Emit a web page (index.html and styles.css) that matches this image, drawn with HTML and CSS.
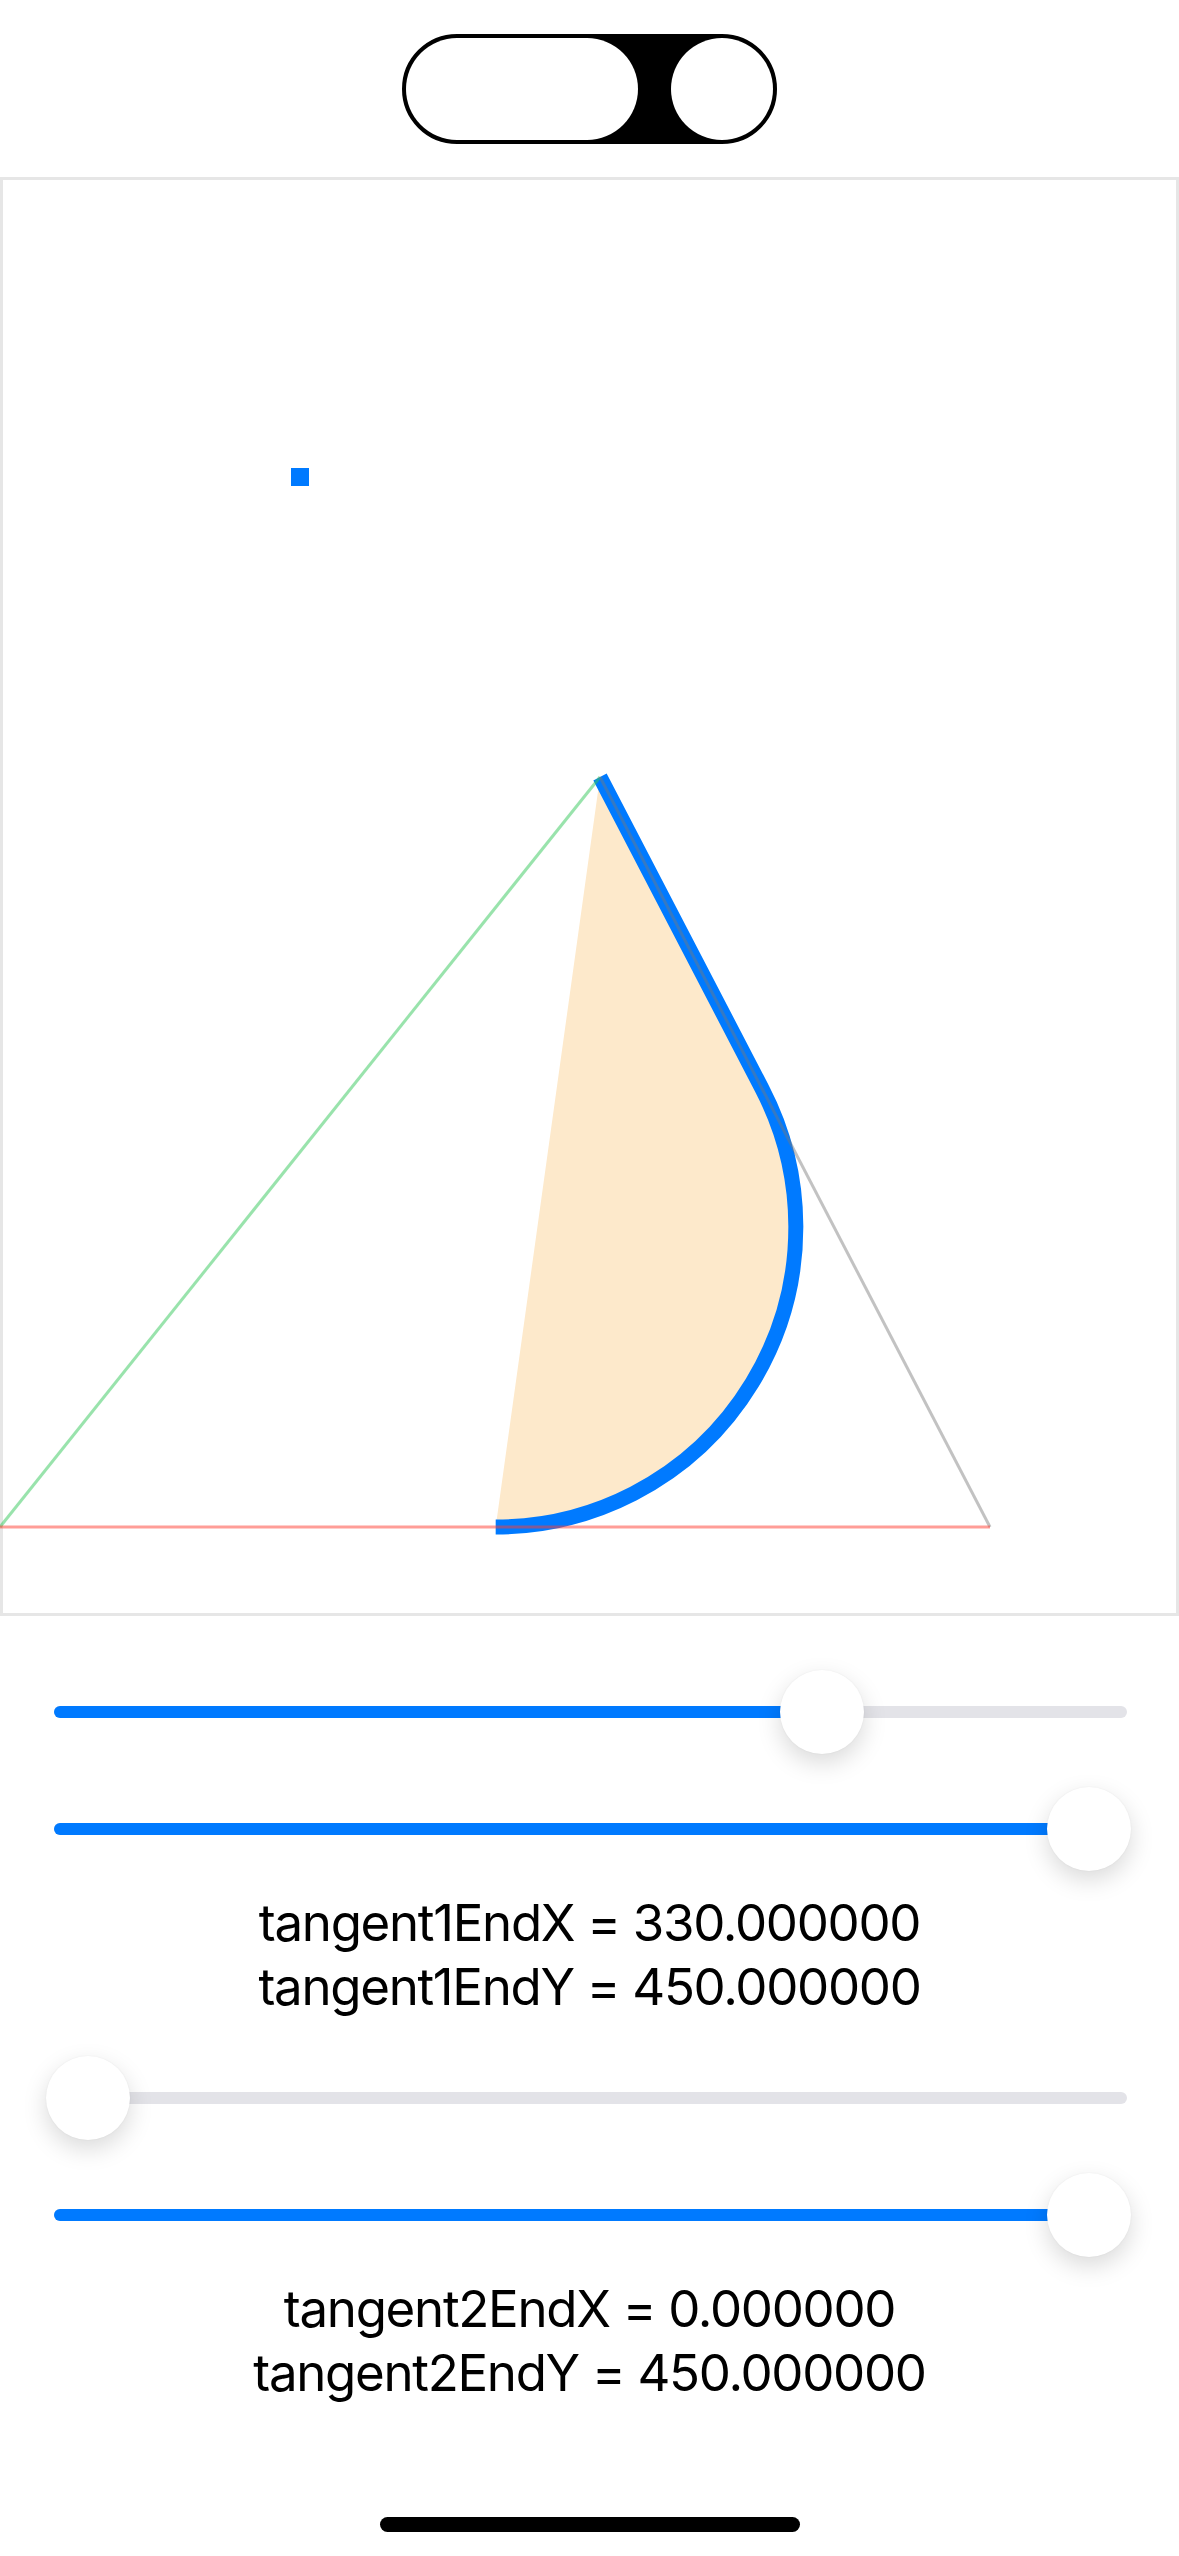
FILE: index.html
```html
<!DOCTYPE html>
<html lang="en">
<head>
  <meta charset="UTF-8" />
  <meta name="viewport" content="width=device-width, initial-scale=1" />
  <title>Arc to point</title>
  <link rel="stylesheet" href="styles.css">
</head>
<body>

  <div class="screen">

    <!-- segmented toggle -->
    <div class="toggle">
      <div class="toggle-left"></div>
      <div class="toggle-right"></div>
    </div>

    <!-- drawing area, coordinates in points (x3) -->
    <svg class="canvas" viewBox="0 0 393 479.667" width="1179" height="1439">
      <rect x="0.5" y="0.5" width="392" height="478.667" fill="#fff" stroke="#e6e6e6" stroke-width="1" />
      <rect x="97" y="97" width="6" height="6" fill="#007aff" />
      <path d="M200 200 L253.97 303.81 A100 100 0 0 1 165.23 450 Z" fill="#fde9cb" />
      <path d="M200 200 L253.97 303.81 A100 100 0 0 1 165.23 450" fill="none" stroke="#007aff" stroke-width="5" />
      <line x1="0" y1="450" x2="200" y2="200" stroke="rgba(52, 199, 89, 0.5)" stroke-width="1" />
      <line x1="200" y1="200" x2="330" y2="450" stroke="rgba(120, 120, 120, 0.45)" stroke-width="1" />
      <line x1="330" y1="450" x2="0" y2="450" stroke="rgba(255, 59, 48, 0.5)" stroke-width="1" />
    </svg>

    <div class="controls">
      <div class="slider first">
        <div class="track">
          <div class="fill" style="width: 768px"></div>
          <div class="thumb" style="left: 726px"></div>
        </div>
      </div>
      <div class="slider">
        <div class="track">
          <div class="fill" style="width: 1035px"></div>
          <div class="thumb" style="left: 993px"></div>
        </div>
      </div>
      <div class="readout">
        <p>tangent1EndX = 330.000000</p>
        <p>tangent1EndY = 450.000000</p>
      </div>

      <div class="slider spaced">
        <div class="track">
          <div class="fill" style="width: 34px"></div>
          <div class="thumb" style="left: -8px"></div>
        </div>
      </div>
      <div class="slider">
        <div class="track">
          <div class="fill" style="width: 1035px"></div>
          <div class="thumb" style="left: 993px"></div>
        </div>
      </div>
      <div class="readout">
        <p>tangent2EndX = 0.000000</p>
        <p>tangent2EndY = 450.000000</p>
      </div>
    </div>

    <div class="home-indicator"></div>
  </div>

</body>
</html>
```

FILE: styles.css
```css
html, body {
  margin: 0;
  padding: 0;
  background: #fff;
}

body {
  font-family: Inter, 'Noto Sans', 'Liberation Sans', sans-serif;
  color: #000;
}

.screen {
  width: 1179px;
  height: 2556px;
  display: flex;
  flex-direction: column;
  align-items: center;
  overflow: hidden;
}

/* 上部のトグル */
.toggle {
  margin-top: 34px;
  width: 375px;
  height: 110px;
  box-sizing: border-box;
  border: 4px solid #000;
  border-radius: 55px;
  background: #000;
  display: flex;
  justify-content: space-between;
}

.toggle-left {
  width: 232px;
  height: 102px;
  border-radius: 51px;
  background: #fff;
}

.toggle-right {
  width: 102px;
  height: 102px;
  border-radius: 50%;
  background: #fff;
}

.canvas {
  display: block;
  margin-top: 33px;
  width: 1179px;
  height: 1439px;
}

.controls {
  width: 100%;
  display: flex;
  flex-direction: column;
}

/* スライダー */
.slider {
  height: 84px;
  padding: 0 52px 0 54px;
  display: flex;
  align-items: center;
  margin-top: 33px;
}

.slider.first {
  margin-top: 54px;
}

.slider.spaced {
  margin-top: 37px;
}

.track {
  position: relative;
  flex: 1;
  height: 12px;
  border-radius: 6px;
  background: #e3e3e8;
}

.fill {
  height: 12px;
  border-radius: 6px;
  background: #007aff;
}

.thumb {
  position: absolute;
  top: -36px;
  width: 84px;
  height: 84px;
  border-radius: 50%;
  background: #fff;
  box-shadow: 0 9px 24px rgba(0, 0, 0, 0.15), 0 0 2px rgba(0, 0, 0, 0.06);
}

.readout {
  margin-top: 20px;
  text-align: center;
  font-size: 51px;
  line-height: 64px;
  letter-spacing: -1.3px;
}

.readout p {
  margin: 0;
}

.home-indicator {
  margin-top: auto;
  margin-bottom: 24px;
  width: 420px;
  height: 15px;
  border-radius: 8px;
  background: #000;
}
```
